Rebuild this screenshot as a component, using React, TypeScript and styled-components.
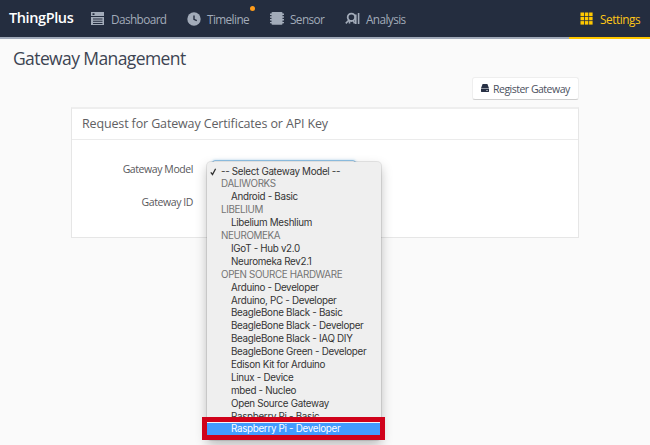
import React from "react";
import styled, { createGlobalStyle } from "styled-components";

const GlobalStyle = createGlobalStyle`
  * { box-sizing: border-box; }
  body { margin: 0; background: #fafafa; overflow: hidden; font-family: "Open Sans", "Noto Sans", sans-serif; }
`;

const Page = styled.div`
  height: 445px;
  overflow: hidden;
  background: #fafafa;
`;

const NavBar = styled.nav`
  display: flex;
  height: 39px;
  background: #242d3f;
  box-shadow: inset 0 -2px #a0a9b9;
`;

const Brand = styled.div`
  width: 91px;
  padding-left: 9px;
  font-size: 14.5px;
  font-weight: 600;
  line-height: 36px;
  letter-spacing: -0.4px;
  color: #fff;
`;

const NavItem = styled.a<{ $width: number; $spacing: number; $gap?: number }>`
  position: relative;
  display: flex;
  width: ${(p) => p.$width}px;
  gap: ${(p) => p.$gap ?? 7}px;
  padding-top: 1px;
  font-size: 11.8px;
  line-height: 36px;
  letter-spacing: ${(p) => p.$spacing}px;
  white-space: nowrap;
  color: #a2abb9;

  svg { flex: none; margin-top: 11px; }
`;

const SettingsItem = styled(NavItem)`
  margin-left: auto;
  padding-left: 11px;
  color: #ffc617;
  font-weight: 500;
  box-shadow: inset 0 -2px #ffc800;
`;

const Dot = styled.span`
  position: absolute;
  top: 6px;
  right: 15px;
  width: 5px;
  height: 5px;
  border-radius: 50%;
  background: #ff9c1a;
`;

const Title = styled.h1`
  margin: 0;
  padding-left: 13px;
  height: 38px;
  font-size: 17.5px;
  font-weight: 400;
  line-height: 38px;
  letter-spacing: -0.6px;
  color: #3d4452;
`;

const Content = styled.main`
  width: 508px;
  margin-left: 71px;
`;

const Button = styled.button`
  display: flex;
  align-items: center;
  gap: 4px;
  width: 107px;
  height: 23px;
  margin: 0 0 7px auto;
  padding: 0 0 0 8px;
  border: 1px solid #eeeeee;
  border-bottom-color: #cfcfcf;
  border-radius: 3px;
  background: #fff;
  font: 10.5px "Open Sans", sans-serif;
  letter-spacing: -0.5px;
  white-space: nowrap;
  color: #4b5160;
`;

const Panel = styled.section`
  height: 131px;
  border: 1px solid #e6e6e6;
  border-top: 2px solid #eeeeee;
  background: #fff;
`;

const PanelTitle = styled.h2`
  margin: 0;
  height: 31px;
  padding-left: 10px;
  border-bottom: 1px solid #ebebeb;
  font-size: 12.5px;
  font-weight: 400;
  line-height: 29px;
  letter-spacing: -0.14px;
  color: #606063;
`;

const Form = styled.div`
  padding-top: 13px;
`;

const Field = styled.div`
  position: relative;
  display: flex;
  height: 33px;
  gap: 19px;
`;

const Label = styled.label`
  width: 121px;
  font-size: 10.5px;
  line-height: 33px;
  letter-spacing: -0.42px;
  text-align: right;
  white-space: nowrap;
  color: #58585c;
`;

const Select = styled.div`
  width: 144px;
  height: 23px;
  margin-top: 7px;
  border: 1px solid #8fc0e4;
  border-radius: 3px;
  box-shadow: 0 0 3px #b9dbf2;
`;

const Menu = styled.ul`
  position: absolute;
  z-index: 1;
  top: 9px;
  left: 135px;
  width: 174px;
  height: 278px;
  margin: 0;
  padding: 3.6px 0 0;
  border-radius: 4px;
  background: #efefef;
  box-shadow: 0 0 0 1px rgba(0, 0, 0, 0.09), 0 5px 12px rgba(0, 0, 0, 0.26);
  list-style: none;
  font-family: Inter, sans-serif;
  font-size: 9.8px;
`;

const MenuRow = styled.li<{ $kind: "root" | "group" | "option"; $active: boolean }>`
  position: relative;
  height: 12.9px;
  padding-left: ${(p) => (p.$kind === "option" ? 24 : 14)}px;
  background: ${(p) => (p.$active ? "#439bff" : "transparent")};
  color: ${(p) => (p.$active ? "#fff" : p.$kind === "group" ? "#747474" : "#343434")};
  line-height: 12.9px;
  letter-spacing: ${(p) => (p.$kind === "group" ? -0.36 : -0.3)}px;
  white-space: nowrap;
`;

const Check = styled.svg`
  position: absolute;
  left: 3px;
  top: 2px;
`;

const Highlight = styled.div`
  position: absolute;
  z-index: 2;
  top: 264px;
  left: 130px;
  width: 183px;
  height: 23px;
  border: 5px solid #d0021b;
  box-shadow: inset 0 1px #f4f6fa;
`;

const DashboardIcon = () => (
  <svg width="13" height="13" viewBox="0 0 13 13">
    <path d="M0 0h13v4H0zM0 5h13v8H0z" fill="#a2abb9" />
    <path d="M1.5 1.2h2v1.8h-2zM2 6.5h9.5v1H2zM2 8.7h9.5v1H2zM2 10.9h9.5v1H2z" fill="#242d3f" />
  </svg>
);

const ClockIcon = () => (
  <svg width="14" height="14" viewBox="0 0 14 14">
    <circle cx="7" cy="7" r="6.7" fill="#a2abb9" />
    <path d="M7 3.6v3.8l2.8 1.2" fill="none" stroke="#242d3f" strokeWidth="1.4" />
  </svg>
);

const SensorIcon = () => (
  <svg width="14" height="13" viewBox="0 0 14 13">
    <rect x="1.5" y="0" width="11" height="12.8" rx="1" fill="#a2abb9" />
    <path d="M0 2.2h14M0 5h14M0 7.8h14M0 10.6h14" stroke="#a2abb9" strokeWidth="1.4" />
  </svg>
);

const AnalysisIcon = () => (
  <svg width="15" height="13" viewBox="0 0 15 13" fill="none" stroke="#a2abb9">
    <circle cx="6.4" cy="5.3" r="3.7" strokeWidth="1.8" />
    <path d="M4 8 .8 11.4M8.300 8 9.500 11.6M4.500 11.5V9M10.8 2.5v9.5M13.6 1v11" strokeWidth="1.6" />
  </svg>
);

const GridIcon = () => (
  <svg width="13" height="13" viewBox="0 0 13 13" fill="#ffc800">
    {[0.5, 4.8, 9.1].map((y) =>
      [0.5, 4.8, 9.1].map((x) => <rect key={`${x}-${y}`} x={x} y={y} width="3.5" height="3.5" />)
    )}
  </svg>
);

const GatewayIcon = () => (
  <svg width="8" height="9" viewBox="0 0 8 9" fill="#273044">
    <path d="M1.6 0h4.8L8 4.3H0zM0 4.700h8v2.5q0 .9-.9.9H.9Q0 8.100 0 7.200z" />
    <path d="M5 6.500h2" stroke="#fff" strokeWidth=".5" />
  </svg>
);

type Row = { kind: "root" | "group" | "option"; text: string };
const group = (text: string): Row => ({ kind: "group", text });
const option = (text: string): Row => ({ kind: "option", text });

const rows: Row[] = [
  { kind: "root", text: "-- Select Gateway Model --" },
  group("DALIWORKS"),
  option("Android - Basic"),
  group("LIBELIUM"),
  option("Libelium Meshlium"),
  group("NEUROMEKA"),
  option("IGoT - Hub v2.0"),
  option("Neuromeka Rev2.1"),
  group("OPEN SOURCE HARDWARE"),
  option("Arduino - Developer"),
  option("Arduino, PC - Developer"),
  option("BeagleBone Black - Basic"),
  option("BeagleBone Black - Developer"),
  option("BeagleBone Black - IAQ DIY"),
  option("BeagleBone Green - Developer"),
  option("Edison Kit for Arduino"),
  option("Linux - Device"),
  option("mbed - Nucleo"),
  option("Open Source Gateway"),
  option("Raspberry Pi - Basic"),
  option("Raspberry Pi - Developer"),
];

export default function App() {
  return (
    <Page>
      <GlobalStyle />
      <NavBar>
        <Brand>ThingPlus</Brand>
        <NavItem $width={96} $spacing={-0.6}><DashboardIcon />Dashboard</NavItem>
        <NavItem $width={83} $spacing={-0.6} $gap={6}><ClockIcon />Timeline<Dot /></NavItem>
        <NavItem $width={75} $spacing={-0.6} $gap={6}><SensorIcon />Sensor</NavItem>
        <NavItem $width={80} $spacing={-0.6} $gap={6}><AnalysisIcon />Analysis</NavItem>
        <SettingsItem $width={81} $spacing={-0.45}><GridIcon />Settings</SettingsItem>
      </NavBar>
      <Title>Gateway Management</Title>
      <Content>
        <Button><GatewayIcon />Register Gateway</Button>
        <Panel>
          <PanelTitle>Request for Gateway Certificates or API Key</PanelTitle>
          <Form>
            <Field>
              <Label>Gateway Model</Label>
              <Select />
              <Menu>
                {rows.map((row, i) => (
                  <MenuRow key={row.text} $kind={row.kind} $active={i === rows.length - 1}>
                    {row.kind === "root" && (
                      <Check width="7" height="8" viewBox="0 0 7 8">
                        <path d="M.8 4.300 2.500 6.500 5.600.7" fill="none" stroke="#303030" strokeWidth="1.300" />
                      </Check>
                    )}
                    {row.text}
                  </MenuRow>
                ))}
              </Menu>
              <Highlight />
            </Field>
            <Field>
              <Label>Gateway ID</Label>
            </Field>
          </Form>
        </Panel>
      </Content>
    </Page>
  );
}
